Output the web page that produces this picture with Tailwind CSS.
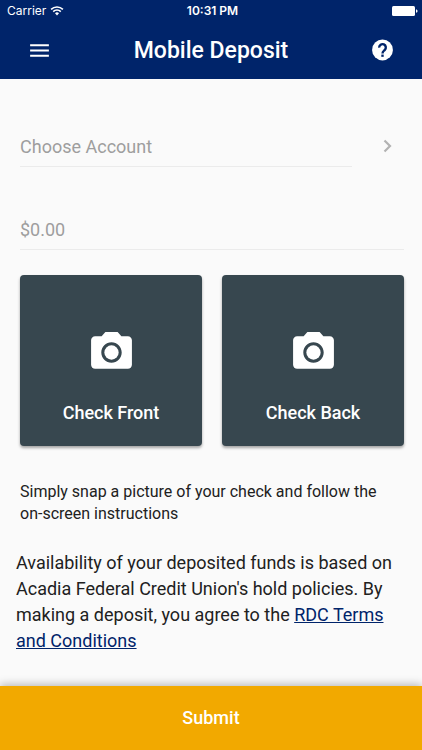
<!DOCTYPE html>
<html lang="en">
<head>
<meta charset="utf-8">
<meta name="viewport" content="width=device-width, initial-scale=1">
<title>Mobile Deposit</title>
<script src="https://cdn.jsdelivr.net/npm/@tailwindcss/browser@4"></script>
</head>
<body class="flex min-h-screen flex-col bg-[#fafafa] font-[Roboto,sans-serif] text-[#212121]">
<header class="bg-[#00246a] text-white">
  <div class="grid h-[22px] grid-cols-3 items-center pr-1 pl-[7px] font-[Inter,sans-serif] text-xs">
    <div class="flex items-center gap-1"><span>Carrier</span>
      <svg class="h-[10px] w-[14px]" viewBox="0 0 13 10" fill="none" stroke="currentColor" stroke-width="1.6" aria-hidden="true"><path d="M.6 3.4a8.4 8.4 0 0 1 11.8 0M2.7 5.6a5.4 5.4 0 0 1 7.6 0"/><path d="M4.5 7.3a2.9 2.9 0 0 1 4 0l-2 2.1z" fill="currentColor" stroke="none"/></svg>
    </div>
    <span class="text-center font-semibold">10:31 PM</span>
    <svg class="h-[10px] w-[26px] justify-self-end" viewBox="0 0 26 10" fill="currentColor" aria-hidden="true"><rect width="23" height="10" rx="1.5"/><path d="M24 3.2q1.6.4 1.6 1.8T24 6.8z"/></svg>
  </div>
  <div class="flex h-[57px] items-center justify-between px-[27px]">
    <button type="button" aria-label="Menu"><svg class="size-[25px]" viewBox="0 0 24 24" fill="currentColor"><path d="M3 18h18v-2H3v2zm0-5h18v-2H3v2zm0-7v2h18V6H3z"/></svg></button>
    <h1 class="text-[23px] leading-[33px] font-medium">Mobile Deposit</h1>
    <button type="button" aria-label="Help"><svg class="size-[25px]" viewBox="0 0 24 24" fill="currentColor"><circle cx="12" cy="11.500" r="10"/><g fill="none" stroke="#00246a" stroke-width="2.300"><path d="M8.800 9.200a3.200 3.200 0 1 1 5.300 2.300C12.900 12.500 12 13 12 14.800"/><path d="M12 15.900v2.200"/></g></svg></button>
  </div>
</header>
<main class="flex-1 pt-[47px] pr-[18px] pb-7 pl-5">
  <div class="flex items-center">
    <input aria-label="Choose Account" placeholder="Choose Account" class="h-[41px] min-w-0 flex-1 border-b border-[#ebebeb] text-lg outline-none placeholder:text-[#9e9e9e]">
    <button type="button" aria-label="Open account list" class="ml-5"><svg class="size-8" viewBox="0 0 32 32" fill="none" stroke="#b2b2b2" stroke-width="2.2"><path d="m12.500 9.500 5.500 5.500-5.500 5.500"/></svg></button>
  </div>
  <input aria-label="Amount" placeholder="$0.00" class="mt-[42px] h-[41px] w-full border-b border-[#ebebeb] text-lg outline-none placeholder:text-[#9e9e9e]">
  <div class="mt-[25px] grid grid-cols-2 gap-5 text-lg font-medium text-white">
    <button type="button" class="flex flex-col items-center gap-[22px] rounded bg-[#37474f] pt-[53px] pb-5 shadow-[0_2px_3px_rgba(0,0,0,0.35)]">
      <svg class="size-[49px]" viewBox="0 0 24 24" fill="currentColor" aria-hidden="true"><circle cx="12" cy="12" r="3.5"/><path d="M9 2L7.170 4H4c-1.100 0-2 .9-2 2v12c0 1.100.9 2 2 2h16c1.100 0 2-.9 2-2V6c0-1.100-.9-2-2-2h-3.170L15 2H9zm3 15c-2.760 0-5-2.240-5-5s2.240-5 5-5 5 2.240 5 5-2.240 5-5 5z"/></svg>
      <span class="leading-[27px]">Check Front</span>
    </button>
    <button type="button" class="flex flex-col items-center gap-[22px] rounded bg-[#37474f] pt-[53px] pb-5 shadow-[0_2px_3px_rgba(0,0,0,0.35)]">
      <svg class="size-[49px]" viewBox="0 0 24 24" fill="currentColor" aria-hidden="true"><circle cx="12" cy="12" r="3.5"/><path d="M9 2L7.170 4H4c-1.100 0-2 .9-2 2v12c0 1.100.9 2 2 2h16c1.100 0 2-.9 2-2V6c0-1.100-.9-2-2-2h-3.170L15 2H9zm3 15c-2.760 0-5-2.240-5-5s2.240-5 5-5 5 2.240 5 5-2.240 5-5 5z"/></svg>
      <span class="leading-[27px]">Check Back</span>
    </button>
  </div>
  <p class="mt-[35px] text-base leading-[22px]">Simply snap a picture of your check and follow the <span class="whitespace-nowrap">on-screen</span> instructions</p>
  <p class="-mx-1 mt-[25px] text-lg leading-[26px]">Availability of your deposited funds is based on Acadia Federal Credit Union's hold policies. By making a deposit, you agree to the <a href="#terms" class="text-[#00246a] underline">RDC Terms and Conditions</a></p>
</main>
<button type="button" class="h-16 bg-[#f2a900] text-lg font-medium text-white shadow-[0_-2px_8px_rgba(0,0,0,0.25)]">Submit</button>
</body>
</html>
